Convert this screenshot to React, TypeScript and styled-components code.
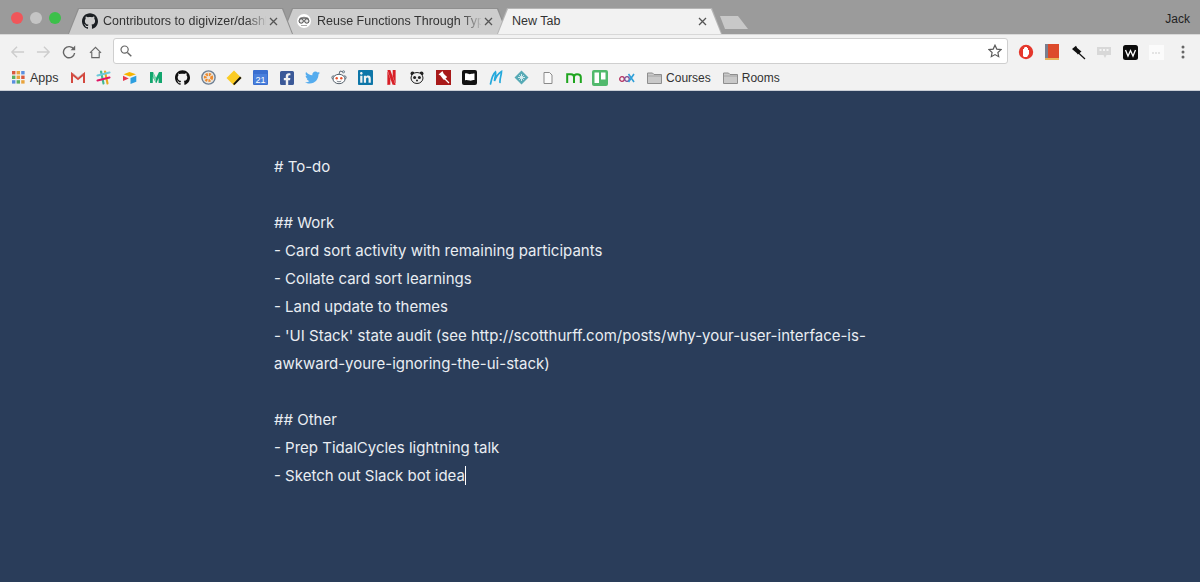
import React from "react";
import styled, { createGlobalStyle } from "styled-components";
import { SiGithub, SiLinkedin, SiNetflix } from "react-icons/si";
import { FaTwitter, FaFacebookSquare } from "react-icons/fa";

const Global = createGlobalStyle`
  html, body { margin: 0; padding: 0; height: 100%; background: #2a3d5a; overflow: hidden; }
  #root { height: 582px; }
`;

const Page = styled.div`
  width: 1200px; height: 582px; display: flex; flex-direction: column;
  font-family: "Liberation Sans", Arial, sans-serif; overflow: hidden;
`;
const TitleBar = styled.header`
  height: 34px; flex: none; background: #9b9b9b; display: flex; align-items: flex-end;
  padding-left: 11px; box-sizing: border-box; position: relative;
`;
const Lights = styled.div`
  display: flex; gap: 7px; align-self: flex-start; margin-top: 12px; margin-right: 7px; width: 50px; flex: none;
`;
const Light = styled.span<{ $c: string }>`
  width: 12px; height: 12px; border-radius: 50%; background: ${p => p.$c}; flex: none;
`;
const Tabs = styled.div`display: flex; align-items: flex-end;`;
const Tab = styled.div<{ $active?: boolean; $w: number; $z: number; $overlap: number }>`
  position: relative; height: 26px; width: ${p => p.$w}px; margin-right: -${p => p.$overlap}px; flex: none;
  z-index: ${p => p.$z};
  display: flex; align-items: center; padding: 0 15px 0 ${p => (p.$active ? 15 : 14)}px; box-sizing: border-box;
  background: ${p => (p.$active ? "#b5b5b5" : "#8f8f8f")};
  clip-path: polygon(0 100%, 10px 0, calc(100% - 10px) 0, 100% 100%);
  &::before {
    content: ""; position: absolute; inset: 1px 1px 0 1px;
    background: ${p => (p.$active ? "#f2f2f2" : "#cdcdcd")};
    clip-path: polygon(0 100%, 10px 0, calc(100% - 10px) 0, 100% 100%);
  }
  & > * { position: relative; }
`;
const TabIcon = styled.span`width: 16px; height: 16px; flex: none; margin-right: 5px; display: flex; color: #1b1f23;`;
const TabLabel = styled.span<{ $fade?: boolean }>`
  flex: 1; min-width: 0; white-space: nowrap; font-size: 12.5px; color: #333;
  ${p => p.$fade && "mask-image: linear-gradient(to right, #000 88%, rgba(0,0,0,.1) 100%);"}
`;
const TabClose = styled.span`width: 9px; height: 9px; flex: none; margin-left: 3px; display: flex;`;
const NewTab = styled.div`
  width: 28px; height: 13px; background: #c8c8c8; flex: none; margin: 0 0 5px 1px;
  clip-path: polygon(0 0, 18px 0, 100% 100%, 5px 100%);
`;
const Jack = styled.div`
  position: absolute; right: 10px; top: 12px; font-size: 12px; color: #222;
`;

const Toolbar = styled.div`
  height: 31px; flex: none; background: #f2f2f2; border-top: 1px solid #d8d8d8; box-sizing: border-box;
  display: flex; align-items: center; padding: 4px 0 0 4px;
`;
const Nav = styled.div`
  width: 26px; height: 26px; flex: none; display: flex; align-items: center; justify-content: center;
`;
const Omni = styled.div`
  width: 895px; height: 26px; margin: 0 0 2px 5px; flex: none; box-sizing: border-box; background: #fff;
  border: 1px solid #cfcfcf; border-radius: 3px; display: flex; align-items: center; justify-content: space-between;
  padding: 0 5px 0 6px;
`;
const Extensions = styled.div`display: flex; align-items: center; margin-left: 5px;`;
const ExtSlot = styled.div`
  width: 26.1px; height: 26px; flex: none; display: flex; align-items: center; justify-content: center;
`;

const Bookmarks = styled.nav`
  height: 26px; flex: none; background: #f2f2f2; border-bottom: 1px solid #c9ced6; box-sizing: border-box;
  display: flex; align-items: center; padding-left: 12px; font-size: 12.5px; color: #333;
`;
const AppsLabel = styled.span`margin-left: 5px; margin-right: 6px;`;
const Fav = styled.span`
  width: 26.15px; height: 24px; flex: none; display: flex; align-items: center; justify-content: center;
`;
const Folders = styled.div`display: flex; align-items: center; margin-left: 7.5px; font-size: 12px;`;
const Folder = styled.span`display: flex; align-items: center; gap: 4px; margin-right: 12px; flex: none;`;

const Editor = styled.main`
  flex: 1; background: #2a3d5a; padding: 62px 0 0 274px; box-sizing: border-box;
  color: #e9edf2; font-family: Inter, "Liberation Sans", sans-serif; font-size: 15px; line-height: 28.1px;
`;
const Notes = styled.div`width: 600px; white-space: pre-wrap; height: 281px;`;
const Line = styled.div`min-height: 28.1px;`;
const Caret = styled.span`
  display: inline-block; width: 1px; height: 19px; background: #fff; vertical-align: -4px;
`;

const X = ({ c = "#555" }: { c?: string }) => (
  <svg width="9" height="9" viewBox="0 0 9 9"><path d="M1 1l7 7M8 1L1 8" stroke={c} strokeWidth="1.3" /></svg>
);
const Nerd = () => (
  <svg width="16" height="16" viewBox="0 0 16 16">
    <circle cx="8" cy="8" r="7" fill="#fff" />
    <path d="M3 6c1-3 9-3 10 0z" fill="#888" />
    <circle cx="5.2" cy="8" r="2.2" fill="#e6e6e6" stroke="#333" strokeWidth=".9" />
    <circle cx="10.8" cy="8" r="2.2" fill="#e6e6e6" stroke="#333" strokeWidth=".9" />
    <path d="M5 12.5h6" stroke="#aaa" />
  </svg>
);
const Arrow = ({ flip }: { flip?: boolean }) => (
  <svg width="15" height="14" viewBox="0 0 16 14">
    <path d="M15 7H2M7.5 1.5L2 7l5.5 5.5" fill="none" stroke="#cdcdcd" strokeWidth="1.5" transform={flip ? "matrix(-1 0 0 1 16 0)" : undefined} />
  </svg>
);
const Reload = () => (
  <svg width="14" height="14" viewBox="0 0 14 14">
    <path d="M11.8 4.2A5.6 5.6 0 1 0 12.6 8" fill="none" stroke="#666" strokeWidth="1.4" />
    <path d="M8.6 5.2h4.6V.6z" fill="#666" />
  </svg>
);
const Home = () => (
  <svg width="13" height="13" viewBox="0 0 14 13">
    <path d="M1 7l6-6 6 6M3 6v6h8V6" fill="none" stroke="#666" strokeWidth="1.2" />
  </svg>
);
const Search = () => (
  <svg width="12" height="12" viewBox="0 0 12 12">
    <circle cx="4.6" cy="4.6" r="3.6" fill="none" stroke="#666" strokeWidth="1.2" />
    <path d="M7.4 7.4L11.3 11.3" stroke="#666" strokeWidth="1.4" />
  </svg>
);
const Star = () => (
  <svg width="14" height="14" viewBox="0 0 14 14">
    <path d="M7 1.2l1.8 3.9 4.2.5-3.1 2.9.8 4.2L7 10.6l-3.7 2.1.8-4.2L1 5.6l4.2-.5z" fill="none" stroke="#5a5a5a" strokeWidth="1.2" />
  </svg>
);
const AppsGrid = () => {
  const colors = ["#d9593e", "#e8a33d", "#5a8fe0", "#5caf60", "#e8a33d", "#d9593e", "#5a8fe0", "#5caf60", "#e8a33d"];
  return (
    <svg width="13" height="13" viewBox="0 0 13 13">
      {colors.map((c, i) => (
        <rect key={i} x={(i % 3) * 4.6} y={Math.floor(i / 3) * 4.6} width="3.4" height="3.4" fill={c} />
      ))}
    </svg>
  );
};
const Gmail = () => (
  <svg width="14" height="12" viewBox="0 0 14 12">
    <path d="M1 11V2l6 5 6-5v9" fill="none" stroke="#d4493f" strokeWidth="2" />
    <path d="M2 1.500L7 5.500 12 1.500" fill="none" stroke="#c9a6a3" strokeWidth=".7" />
  </svg>
);
const Slack = () => (
  <svg width="15" height="15" viewBox="0 0 15 15" strokeWidth="2.1" strokeLinecap="round">
    <path d="M5 1.500l2.500 12" stroke="#3eb991" />
    <path d="M9 1.500l2.500 12" stroke="#e9a820" />
    <path d="M1.500 10.500l12-3" stroke="#e01765" />
    <path d="M1.500 5.500l12-3" stroke="#6ecadc" />
  </svg>
);
const Airtable = () => (
  <svg width="15" height="13" viewBox="0 0 15 13">
    <path d="M7.5 1L14 3.3 7.8 5.6 1.5 3.3z" fill="#f7b500" />
    <path d="M8.5 7l5.8-2.3v6L8.5 13z" fill="#2d9fe0" />
    <path d="M1 4.800l5.800 2.800L1 10z" fill="#e8384f" />
  </svg>
);
const Medium = () => (
  <svg width="14" height="13" viewBox="0 0 14 13">
    <path d="M1 1h3l3 6 3-6h3v11h-3.4V7L7.5 12H7L3.8 6v6H1z" fill="#12a66e" />
    <path d="M4 1l3 6v5L4 6z" fill="#7ed4ae" />
  </svg>
);
const Orange = () => (
  <svg width="15" height="15" viewBox="0 0 15 15">
    <circle cx="7.5" cy="7.5" r="6.6" fill="#e9e4dc" stroke="#6d7f94" strokeWidth="1.4" />
    <circle cx="7.5" cy="7.5" r="3.2" fill="none" stroke="#ef8a2c" strokeWidth="2.8" strokeDasharray="2 1" />
  </svg>
);
const CommBank = () => (
  <svg width="16" height="16" viewBox="0 0 16 16">
    <path d="M8 0.5L15.5 8 8 15.5 .5 8z" fill="#fbcc24" />
    <path d="M8.5 15L15.5 8l-1.5-1.5L7 14z" fill="#111" />
  </svg>
);
const Calendar = () => (
  <svg width="15" height="15" viewBox="0 0 15 15">
    <rect width="15" height="15" rx="1" fill="#3a6fd0" />
    <rect x="1" y="4" width="13" height="10" fill="#4a80dc" />
    <text x="7.5" y="12.5" textAnchor="middle" fontSize="9" fontFamily="Liberation Sans" fill="#fff">21</text>
  </svg>
);
const Reddit = () => (
  <svg width="16" height="15" viewBox="0 0 16 15">
    <circle cx="2.500" cy="7.500" r="1.700" fill="#cfe0ea" stroke="#55606b" strokeWidth=".8" />
    <circle cx="13.500" cy="7.500" r="1.700" fill="#cfe0ea" stroke="#55606b" strokeWidth=".8" />
    <ellipse cx="8" cy="9" rx="6" ry="4.700" fill="#fff" stroke="#55606b" />
    <circle cx="5.700" cy="8.300" r="1.200" fill="#e8502a" />
    <circle cx="10.300" cy="8.300" r="1.200" fill="#e8502a" />
    <path d="M8 4.300L9 1l3 .8" fill="none" stroke="#55606b" strokeWidth=".9" />
    <circle cx="12.500" cy="1.800" r="1.100" fill="#cfe0ea" stroke="#55606b" strokeWidth=".7" />
    <path d="M5.800 11c1.400 1 3 1 4.400 0" fill="none" stroke="#55606b" strokeWidth=".8" />
  </svg>
);
const Panda = () => (
  <svg width="14" height="13" viewBox="0 0 14 13">
    <circle cx="2.5" cy="2.5" r="2" fill="#222" />
    <circle cx="11.5" cy="2.5" r="2" fill="#222" />
    <ellipse cx="7" cy="7" rx="6" ry="5.5" fill="#eee" stroke="#222" />
    <circle cx="4.6" cy="6.4" r="1.5" fill="#222" />
    <circle cx="9.4" cy="6.4" r="1.5" fill="#222" />
    <circle cx="7" cy="9.6" r="1" fill="#222" />
  </svg>
);
const RedPin = () => (
  <svg width="15" height="15" viewBox="0 0 15 15">
    <rect width="15" height="15" fill="#a81a1a" />
    <path d="M2.500 4.500L6.500 1l1.200 2.700L10 6l1.200 1-3.200 3-1.400-1.500-2.200-3z" fill="#fff" />
    <path d="M8 8l5 5" stroke="#fff" strokeWidth="1.3" />
  </svg>
);
const FlagIcon = () => (
  <svg width="15" height="15" viewBox="0 0 15 15">
    <rect width="15" height="15" rx="2" fill="#111" />
    <path d="M3 3.500c2.500-1 3.500 1 5.500.6S11 3.500 12.500 3.500V10c-2 0-2.800.8-4.800.6S4.500 9.500 3 10.500z" fill="#fff" />
  </svg>
);
const BlueM = () => (
  <svg width="14" height="15" viewBox="0 0 14 15">
    <path d="M1.500 14C2.500 9 4 4 6.500 2c.8 2-1 6-1 9C7 7 10 3 12.500 1.500 12.500 5 10.500 9 11 12.500" fill="none" stroke="#25a9dc" strokeWidth="1.700" strokeLinecap="round" />
  </svg>
);
const Diamond = () => (
  <svg width="15" height="15" viewBox="0 0 15 15">
    <path d="M7.500 .5l7 7-7 7-7-7z" fill="#57aab5" />
    <path d="M4 7.500h7M7.500 4v7M5.200 5.200l4.600 4.600M9.800 5.200l-4.600 4.600" stroke="#dff1f3" strokeWidth=".9" />
  </svg>
);
const Doc = () => (
  <svg width="10" height="12" viewBox="0 0 10 12">
    <path d="M1 .5h5.500L9 3v8.500H1z" fill="#fafafa" stroke="#8a8a8a" />
  </svg>
);
const GreenM = () => (
  <svg width="16" height="10" viewBox="0 0 16 10">
    <path d="M1.200 10V1.200h3.800c2 0 3 1 3 2.800v6M8 4c0-2 1-2.800 3-2.800s3.800 1 3.800 2.800v6" fill="none" stroke="#1fa51f" strokeWidth="2" />
  </svg>
);
const Trello = () => (
  <svg width="16" height="16" viewBox="0 0 16 16">
    <rect width="16" height="16" rx="2" fill="#51b96c" />
    <rect x="2.500" y="2.500" width="4.500" height="10.500" fill="#fff" />
    <rect x="9" y="2.500" width="4.500" height="7" fill="#fff" />
  </svg>
);
const Edx = () => (
  <svg width="16" height="10" viewBox="0 0 16 10">
    <circle cx="3" cy="6" r="2.300" fill="none" stroke="#b5305f" strokeWidth="1.300" />
    <circle cx="8" cy="6" r="2.300" fill="none" stroke="#7a4a95" strokeWidth="1.300" />
    <path d="M9.500 1l5.500 8M15 1L9.500 9" stroke="#2f9fd8" strokeWidth="1.600" />
  </svg>
);
const FolderIcon = () => (
  <svg width="15" height="12" viewBox="0 0 15 12">
    <path d="M.5 11.500V1h5l1.500 1.500h7.500v9z" fill="#c9c9c9" stroke="#8e8e8e" />
    <path d="M1 4h13" stroke="#a5a5a5" />
  </svg>
);
const RedHand = () => (
  <svg width="16" height="16" viewBox="0 0 16 16">
    <circle cx="8" cy="8" r="7.200" fill="#e5372c" />
    <path d="M5 12V5h1V3.500h1V3h2v1h1v2h1v4l-2 3H6z" fill="#fff" />
  </svg>
);
const BookExt = () => (
  <svg width="14" height="16" viewBox="0 0 14 16">
    <rect width="13" height="14" x="1" fill="#dd4b2c" />
    <rect width="3" height="14" x="0" fill="#7a7f8e" />
    <rect width="14" height="2" y="14" fill="#e8b45a" />
  </svg>
);
const BlackPin = () => (
  <svg width="15" height="15" viewBox="0 0 15 15">
    <path d="M1 4L5 .8l1.200 2.200 3 2.600 1.300 1-3.600 3-1.200-1.500-2.700-2.300z" fill="#111" />
    <path d="M7 7.500l7 6.500" stroke="#111" strokeWidth="1.200" />
  </svg>
);
const GrayChat = () => (
  <svg width="15" height="13" viewBox="0 0 15 13">
    <path d="M0 1h14v8H9.500L8 12 6.500 9H0z" fill="#d8d8d8" />
    <path d="M2.500 4h2M6 4h2M9.500 4h2" stroke="#f4f4f4" strokeWidth="2" />
  </svg>
);
const Wiki = () => (
  <svg width="15" height="15" viewBox="0 0 15 15">
    <rect width="15" height="15" rx="2.500" fill="#0c0c0c" />
    <path d="M2.500 5l2.500 6 2.500-5.500L10 11l2.500-6" fill="none" stroke="#fff" strokeWidth="1.300" />
  </svg>
);
const WhiteExt = () => (
  <svg width="15" height="15" viewBox="0 0 15 15">
    <rect width="15" height="15" fill="#fbfbfb" />
    <path d="M3 8h9" stroke="#e4e4e4" strokeWidth="2" strokeDasharray="2 1" />
  </svg>
);
const Dots = () => (
  <svg width="4" height="14" viewBox="0 0 4 14" fill="#666">
    <circle cx="2" cy="2" r="1.500" /><circle cx="2" cy="7" r="1.500" /><circle cx="2" cy="12" r="1.500" />
  </svg>
);

const favicons: React.ReactNode[] = [
  <Gmail />, <Slack />, <Airtable />, <Medium />, <SiGithub size={15} color="#111" />, <Orange />, <CommBank />, <Calendar />,
  <FaFacebookSquare size={16} color="#3b5998" />, <FaTwitter size={15} color="#55acee" />, <Reddit />,
  <SiLinkedin size={15} color="#0e76a8" />, <SiNetflix size={15} color="#d81f26" />, <Panda />, <RedPin />, <FlagIcon />,
  <BlueM />, <Diamond />, <Doc />, <GreenM />, <Trello />, <Edx />,
];
const exts: React.ReactNode[] = [<RedHand />, <BookExt />, <BlackPin />, <GrayChat />, <Wiki />, <WhiteExt />, <Dots />];

const lines = [
  "# To-do", "", "## Work",
  "- Card sort activity with remaining participants",
  "- Collate card sort learnings",
  "- Land update to themes",
  "- 'UI Stack' state audit (see http://scotthurff.com/posts/why-your-user-interface-is-",
  "awkward-youre-ignoring-the-ui-stack)",
  "", "## Other",
  "- Prep TidalCycles lightning talk",
];

export default function App() {
  return (
    <Page>
      <Global />
      <TitleBar>
        <Lights>
          <Light $c="#f0565a" /><Light $c="#c4c4c4" /><Light $c="#3cc04a" />
        </Lights>
        <Tabs>
          <Tab $w={225} $z={2} $overlap={11}>
            <TabIcon><SiGithub size={16} /></TabIcon>
            <TabLabel $fade>Contributors to digivizer/dashb</TabLabel>
            <TabClose><X /></TabClose>
          </Tab>
          <Tab $w={226} $z={1} $overlap={11}>
            <TabIcon><Nerd /></TabIcon>
            <TabLabel $fade>Reuse Functions Through Type</TabLabel>
            <TabClose><X /></TabClose>
          </Tab>
          <Tab $active $w={225} $z={3} $overlap={3}>
            <TabLabel>New Tab</TabLabel>
            <TabClose><X /></TabClose>
          </Tab>
        </Tabs>
        <NewTab />
        <Jack>Jack</Jack>
      </TitleBar>
      <Toolbar>
        <Nav><Arrow /></Nav>
        <Nav><Arrow flip /></Nav>
        <Nav><Reload /></Nav>
        <Nav><Home /></Nav>
        <Omni><Search /><Star /></Omni>
        <Extensions>{exts.map((e, i) => <ExtSlot key={i}>{e}</ExtSlot>)}</Extensions>
      </Toolbar>
      <Bookmarks>
        <AppsGrid />
        <AppsLabel>Apps</AppsLabel>
        {favicons.map((f, i) => <Fav key={i}>{f}</Fav>)}
        <Folders>
          <Folder><FolderIcon />Courses</Folder>
          <Folder><FolderIcon />Rooms</Folder>
        </Folders>
      </Bookmarks>
      <Editor>
        <Notes>
          {lines.map((l, i) => <Line key={i}>{l}</Line>)}
          <Line>- Sketch out Slack bot idea<Caret /></Line>
        </Notes>
      </Editor>
    </Page>
  );
}
